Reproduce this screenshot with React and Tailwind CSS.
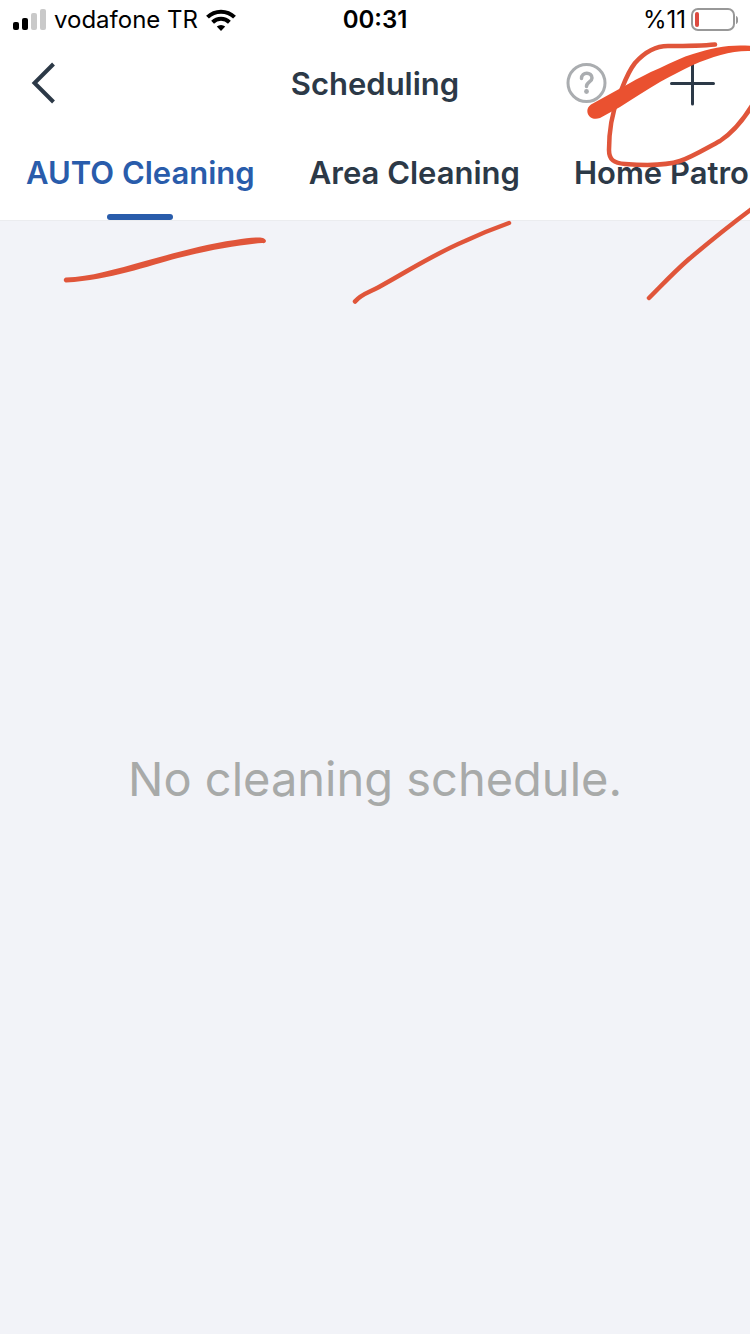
import { useState } from 'react'

const tabs = ['AUTO Cleaning', 'Area Cleaning', 'Home Patrol']

function StatusBar() {
  return (
    <div className="grid grid-cols-3 items-center h-10 px-3 text-black text-2xl">
      <div className="flex items-center gap-2">
        {/* Signal strength */}
        <svg className="w-[34px] h-6 shrink-0" viewBox="0 0 34 24">
          <rect x="1" y="14" width="6" height="8" rx="2" fill="#000" />
          <rect x="10" y="10" width="6" height="12" rx="2" fill="#000" />
          <rect x="19" y="5" width="6" height="17" rx="2" fill="#c9c9c9" />
          <rect x="28" y="1" width="6" height="21" rx="2" fill="#c9c9c9" />
        </svg>
        <span className="whitespace-nowrap">vodafone TR</span>
        {/* Wi-Fi */}
        <svg className="w-[30px] h-6 shrink-0" viewBox="0 0 30 24" fill="none" stroke="#000">
          <path d="M1.5 9.2 A19.2 19.2 0 0 1 28.5 9.2" strokeWidth="4" />
          <path d="M6.6 14.2 A12 12 0 0 1 23.4 14.2" strokeWidth="4" />
          <path d="M15 23 L10.8 18.6 A6 6 0 0 1 19.2 18.6 Z" fill="#000" stroke="none" />
        </svg>
      </div>
      <span className="text-center font-semibold">00:31</span>
      <div className="flex items-center justify-end gap-1">
        <span>%11</span>
        {/* Battery */}
        <svg className="w-12 h-6 shrink-0" viewBox="0 0 48 24">
          <rect x="2" y="1" width="42" height="21" rx="6" fill="none" stroke="#989898" strokeWidth="2" />
          <rect x="5" y="4" width="4" height="15" rx="2" fill="#dc4a40" />
          <path d="M46 8 C49 9 49 15 46 16 Z" fill="#989898" />
        </svg>
      </div>
    </div>
  )
}

function NavBar() {
  return (
    <div className="grid grid-cols-3 items-center h-[88px] px-7 text-[#2c3947]">
      <button type="button" aria-label="Back" className="w-8">
        <svg className="w-8 h-11" viewBox="0 0 32 44" fill="none" stroke="currentColor" strokeWidth="4">
          <path d="M25.5 2 L6.5 21 L25.5 40" />
        </svg>
      </button>
      <h1 className="text-center text-[31px] font-semibold">Scheduling</h1>
      <div className="flex items-center justify-end gap-[54px]">
        <button type="button" aria-label="Help">
          <svg className="w-11 h-11" viewBox="0 0 44 44" fill="none" stroke="#aaadb0">
            <circle cx="22.500" cy="21" r="18.5" strokeWidth="3" />
            <path
              d="M17.5 16.5 C17.5 9.500 28 9.500 28 16 C28 20 22.500 20 22.500 24.500"
              strokeWidth="3.5"
              strokeLinecap="round"
            />
            <circle cx="22.500" cy="29.500" r="2.4" fill="#aaadb0" stroke="none" />
          </svg>
        </button>
        <button type="button" aria-label="Add schedule">
          <svg
            className="w-[60px] h-11"
            viewBox="0 0 60 44"
            fill="none"
            stroke="currentColor"
            strokeWidth="3"
            strokeLinecap="round"
          >
            <path d="M9.500 21.500 H51.500 M30.500 2 V42" />
          </svg>
        </button>
      </div>
    </div>
  )
}

// Hand drawn red marks lying on top of the screen
function Marks() {
  return (
    <svg
      className="absolute top-0 left-0 w-[750px] h-80 pointer-events-none"
      viewBox="0 0 750 320"
      fill="none"
      stroke="#e0553a"
      strokeWidth="4.5"
      strokeLinecap="round"
      strokeLinejoin="round"
    >
      <path d="M715 44.500 C700 46 685 46 668 46 C655 46 643 54 635 63 C627 73 624 84 618 98 C611 116 609 132 609 150 C609 160 614 163 625 164 C645 165.500 665 166 680 161 C692 157 705 149 720 141 C735 131 744 119 753 104" />
      <path
        d="M591 104.500 L620 88.500 C635 80 648 73 660 68 C672 62 683 57 693 54 C713 47 733 44 752 46 L752 51 C733 50 713 56 693 65 C682 70 671 76 660 82 C646 90 633 99 620 107 L600 118 C589 122 583 110 591 104.500 Z"
        fill="#ea5130"
        stroke="none"
      />
      <path
        d="M66 277.500 C90 277 116 269 145 261 C175 253 205 244 235 240 C247 238 256 237 263 238 C268 240 266 244 262 243 C238 245 210 250 178 258 C148 266 110 280 66 282.500 C63 282 63 278 66 277.500 Z"
        fill="#e0553a"
        stroke="none"
      />
      <path d="M355 301.500 C361 294 370 292 379 287 C410 270 432 255 465 241 C480 234 495 228 509 223" />
      <path d="M649 298 C662 285 674 272 689 259 C708 243 730 225 753 208" />
    </svg>
  )
}

export default function App() {
  const [active, setActive] = useState(tabs[0])

  return (
    <div className="relative flex flex-col min-h-screen overflow-hidden bg-[#f2f3f8] font-['Inter','Liberation_Sans',sans-serif]">
      <header className="bg-white border-b border-[#ebecef]">
        <StatusBar />
        <NavBar />
        <nav className="flex gap-[54px] h-[92px] px-[26px] overflow-hidden">
          {tabs.map((tab) => (
            <button
              key={tab}
              type="button"
              onClick={() => setActive(tab)}
              className={`flex flex-col items-center justify-between shrink-0 pt-[22px] text-[31px] font-semibold whitespace-nowrap ${
                active === tab ? 'text-[#295cab]' : 'text-[#2c3947]'
              }`}
            >
              {tab}
              {active === tab && <span className="w-[66px] h-1.5 rounded-full bg-[#295cab]"></span>}
            </button>
          ))}
        </nav>
      </header>

      <main className="flex flex-1 items-center justify-center">
        <p className="pt-1 text-[47px] text-[#a8aaa9]">No cleaning schedule.</p>
      </main>

      <Marks />
    </div>
  )
}
